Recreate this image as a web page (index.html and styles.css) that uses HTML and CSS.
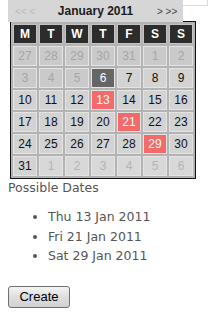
FILE: index.html
```html
<!DOCTYPE html>
<html lang="en">
<head>
  <meta charset="UTF-8">
  <title>Possible Dates</title>
  <link rel="stylesheet" href="styles.css">
</head>
<body>

  <div class="cal">
    <div class="cal-top">
      <div class="cal-head">
        <span class="nav prev">&lt;&lt; &lt;</span>
        <span class="title">January 2011</span>
        <span class="nav next">&gt; &gt;&gt;</span>
      </div>
      <div class="corner"></div>
    </div>

    <table class="grid">
      <tr class="days">
        <th>M</th><th>T</th><th>W</th><th>T</th><th>F</th><th>S</th><th>S</th>
      </tr>
      <tr>
        <td class="other">27</td><td class="other">28</td><td class="other">29</td><td class="other">30</td><td class="other">31</td><td class="other">1</td><td class="other">2</td>
      </tr>
      <tr>
        <td class="other">3</td><td class="other">4</td><td class="other">5</td><td class="today">6</td><td>7</td><td>8</td><td>9</td>
      </tr>
      <tr>
        <td>10</td><td>11</td><td>12</td><td class="picked">13</td><td>14</td><td>15</td><td>16</td>
      </tr>
      <tr>
        <td>17</td><td>18</td><td>19</td><td>20</td><td class="picked">21</td><td>22</td><td>23</td>
      </tr>
      <tr>
        <td>24</td><td>25</td><td>26</td><td>27</td><td>28</td><td class="picked">29</td><td>30</td>
      </tr>
      <tr>
        <td>31</td><td class="other light">1</td><td class="other light">2</td><td class="other light">3</td><td class="other light">4</td><td class="other light">5</td><td class="other light">6</td>
      </tr>
    </table>
  </div>

  <div class="label">Possible Dates</div>
  <ul class="dates">
    <li>Thu 13 Jan 2011</li>
    <li>Fri 21 Jan 2011</li>
    <li>Sat 29 Jan 2011</li>
  </ul>

  <button class="create">Create</button>

</body>
</html>
```

FILE: styles.css
```css
body, html {
  margin: 0;
  padding: 0;
}

body {
  padding: 0 8px;
  font-family: "DejaVu Sans", Verdana, sans-serif;
  background: #fff;
}

/* Calendar header */
.cal-top {
  display: flex;
  align-items: flex-start;
}

.cal-head {
  width: 175px;
  height: 22px;
  background-color: #d6d6d6;
  display: flex;
  align-items: center;
  font-family: "Liberation Sans", Arial, sans-serif;
}

.nav {
  font-size: 10px;
  flex: none;
}

.prev {
  color: #b9b9b9;
  padding-left: 7px;
  width: 31px;
}

.next {
  color: #444;
  padding-left: 12px;
  width: 26px;
}

.title {
  flex: 1;
  text-align: center;
  font-weight: bold;
  font-size: 12px;
  color: #1c1c1c;
}

.corner {
  width: 24px;
  height: 5px;
  border-right: 1px solid #dcdcdc;
  border-bottom: 1px solid #dcdcdc;
}

/* Grid */
.grid {
  margin-left: 2px;
  margin-top: -1px;
  border: 1px solid #111;
  border-spacing: 2px;
  background-color: #b3b3b3;
  font-family: "Liberation Sans", Arial, sans-serif;
  font-size: 12px;
}

.grid th, .grid td {
  width: 22px;
  height: 18px;
  padding: 0;
  text-align: center;
  border: 1px solid #e4e4e4;
}

.grid th {
  background-color: #2c2c2c;
  color: #fff;
  font-weight: bold;
  border-color: #c4c4c4;
}

.grid td {
  background-color: #d3d3d3;
  color: #111;
}

.grid td.other {
  background-color: #cacaca;
  color: #a6a6a6;
}

.grid td.light {
  background-color: #d8d8d8;
  color: #b4b4b4;
}

.grid td.today {
  background-color: #666;
  color: #fff;
}

.grid td.picked {
  background-color: #f26a6a;
  color: #fff;
}

/* Possible dates */
.label {
  font-size: 12.5px;
  line-height: 18px;
  color: #555;
}

.dates {
  margin: 10px 0 20px;
  padding-left: 40px;
  font-size: 12.5px;
  line-height: 19.5px;
  color: #555;
}

.create {
  width: 62px;
  height: 22px;
  padding: 0;
  font-family: "Liberation Sans", Arial, sans-serif;
  font-size: 13px;
  color: #000;
  border: 1px solid #707070;
  border-radius: 3px;
  background: linear-gradient(#f4f4f4, #dedede 50%, #d2d2d2);
}
```
